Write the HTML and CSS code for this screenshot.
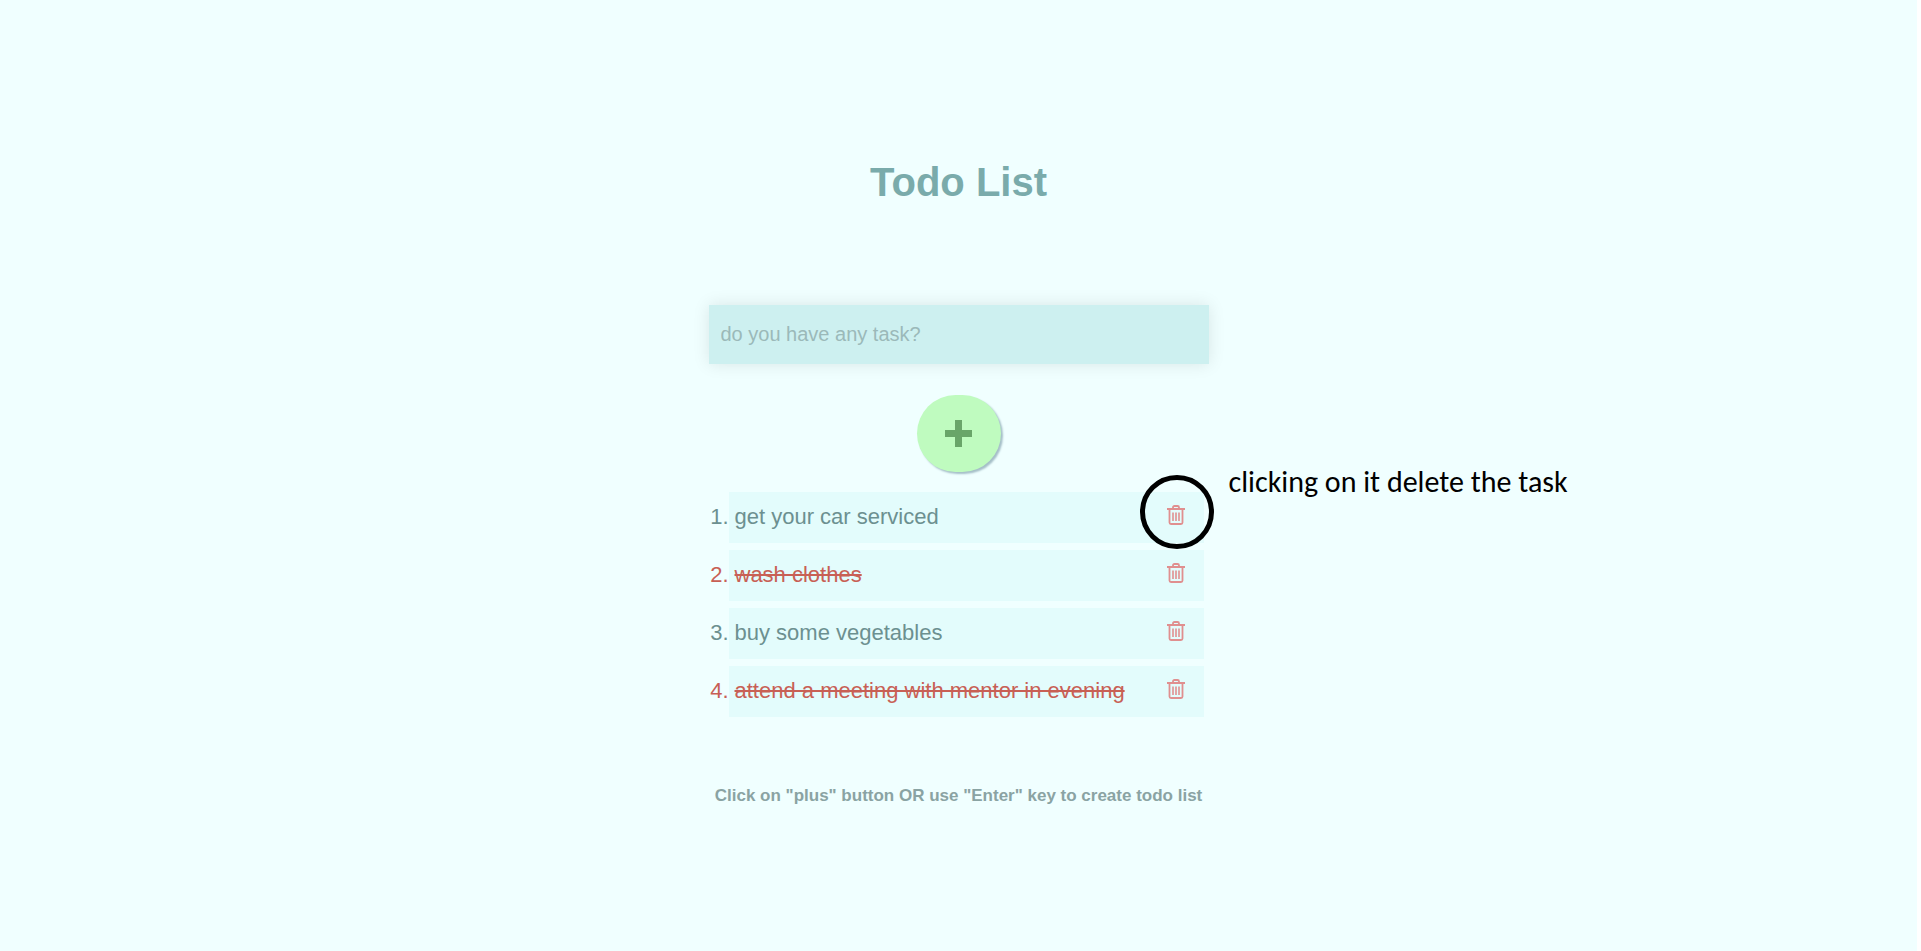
FILE: index.html
```html
<!DOCTYPE html>
<html lang="en">
<head>
<meta charset="utf-8">
<meta name="viewport" content="width=device-width, initial-scale=1">
<title>Todo List</title>
<link rel="stylesheet" href="styles.css">
</head>
<body>
<svg class="sprite" aria-hidden="true">
  <symbol id="trash" viewBox="0 0 18 20">
    <path d="M0 4h18" fill="none" stroke="currentColor" stroke-width="2"/>
    <path d="M6 3.500V2.500Q6 1 7.500 1h3Q12 1 12 2.500v1M2.500 4v13.500Q2.500 19 4 19h10q1.500 0 1.500-1.500V4" fill="none" stroke="currentColor" stroke-width="1.800"/>
    <path d="M6 7.500v8.500M9 7.500v8.500M12 7.500v8.500" fill="none" stroke="currentColor" stroke-width="1.600"/>
  </symbol>
</svg>
<main class="todo">
  <h1 class="title">Todo List</h1>
  <form class="entry">
    <input class="task-input" type="text" placeholder="do you have any task?" aria-label="New task">
    <button class="add" type="button" aria-label="Add task"><svg class="plus" viewBox="0 0 27 27"><path d="M10 0h7v10h10v7H17v10h-7V17H0v-7h10z" fill="currentColor"/></svg></button>
  </form>
  <ol class="tasks">
    <li class="task">
      <div class="row">
        <span class="label">get your car serviced</span>
        <button class="delete" type="button" aria-label="Delete task"><svg class="icon"><use href="#trash"/></svg></button>
        <span class="ring"></span>
        <span class="note">clicking on it delete the task</span>
      </div>
    </li>
    <li class="task done">
      <div class="row">
        <span class="label">wash clothes</span>
        <button class="delete" type="button" aria-label="Delete task"><svg class="icon"><use href="#trash"/></svg></button>
      </div>
    </li>
    <li class="task">
      <div class="row">
        <span class="label">buy some vegetables</span>
        <button class="delete" type="button" aria-label="Delete task"><svg class="icon"><use href="#trash"/></svg></button>
      </div>
    </li>
    <li class="task done">
      <div class="row">
        <span class="label">attend a meeting with mentor in evening</span>
        <button class="delete" type="button" aria-label="Delete task"><svg class="icon"><use href="#trash"/></svg></button>
      </div>
    </li>
  </ol>
  <p class="hint">Click on "plus" button OR use "Enter" key to create todo list</p>
</main>
</body>
</html>
```
FILE: styles.css
```css
* {
  box-sizing: border-box;
}

html {
  background: #fff;
}

body {
  margin: 0 4px 0 0;
  min-height: 100vh;
  background: #f0ffff;
  font-family: "Liberation Sans", Arial, sans-serif;
}

.sprite {
  display: none;
}

.todo {
  display: flex;
  flex-direction: column;
  align-items: center;
  max-width: 500px;
  margin: 0 auto;
  padding-top: 159px;
}

.title {
  margin: 0;
  color: #7aabab;
  font-size: 40px;
  line-height: 46px;
}

.entry {
  display: flex;
  flex-direction: column;
  align-items: center;
  gap: 31px;
  width: 100%;
  margin-top: 100px;
}

.task-input {
  width: 100%;
  height: 59px;
  padding: 0 12px;
  border: 0;
  background: #cdf0f0;
  box-shadow: 0 0 16px rgba(0, 0, 0, 0.1);
  color: #6c9090;
  font: 20px "Liberation Sans", Arial, sans-serif;
}

.task-input::placeholder {
  color: #9bb9b9;
}

.add {
  display: flex;
  align-items: center;
  justify-content: center;
  width: 84px;
  height: 77px;
  padding: 0;
  border: 0;
  border-radius: 40px;
  background: #bffbbf;
  box-shadow: 2px 2px 2px #a5bfc8;
  color: #69a569;
}

.plus {
  width: 27px;
  height: 27px;
}

.tasks {
  display: flex;
  flex-direction: column;
  gap: 7px;
  width: 100%;
  margin: 20px 0 0;
  padding: 0 5px 0 0;
  font-size: 22px;
  list-style: none;
  counter-reset: task;
}

.task {
  display: flex;
  align-items: center;
  color: #6c9090;
  counter-increment: task;
}

.task::before {
  content: counter(task) ".";
  width: 20px;
  padding-bottom: 2px;
  line-height: 26px;
  text-align: right;
}

.done {
  color: #c86055;
}

.row {
  position: relative;
  display: flex;
  flex: 1;
  align-items: center;
  justify-content: space-between;
  height: 51px;
  padding: 0 19px 0 6px;
  background: #e3fcfc;
}

.label {
  padding-bottom: 2px;
  line-height: 26px;
}

.done .label {
  text-decoration: line-through;
}

.delete {
  display: flex;
  padding: 0 0 5px;
  border: 0;
  background: none;
  color: #e08f8f;
}

.icon {
  width: 18px;
  height: 20px;
}

.ring {
  position: absolute;
  top: -17px;
  right: -10px;
  width: 74px;
  height: 74px;
  border: 5px solid #000;
  border-radius: 50%;
}

.note {
  position: absolute;
  top: -26px;
  left: 500px;
  color: #000;
  font: 30px/32px Carlito, Lato, sans-serif;
  white-space: nowrap;
}

.hint {
  margin: 69px 0 0;
  color: #8aa3a3;
  font-size: 17px;
  font-weight: bold;
  line-height: 20px;
}
```
